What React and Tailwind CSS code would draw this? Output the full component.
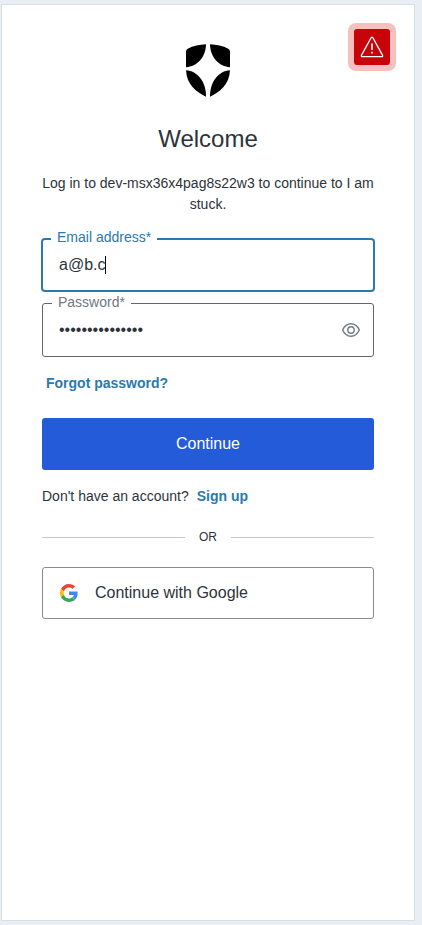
import { useState } from "react";

function Shield() {
  return (
    <svg className="h-[53px] w-11" viewBox="0 0 132 158" preserveAspectRatio="none" role="img" aria-label="Auth0">
      <path d="M60 1C60 38 33 69 0 69V22Q0 17 5 14C22 6 40 2 60 1Z" />
      <path d="M72 1C72 38 99 69 132 69V22Q132 17 127 14C110 6 92 2 72 1Z" />
      <path d="M0 78C34 79 61 114 60 157C30 143 2 120 0 78Z" />
      <path d="M132 78C98 79 71 114 72 157C102 143 130 120 132 78Z" />
    </svg>
  );
}

function GoogleLogo() {
  return (
    <svg className="h-[18px] w-[18px]" viewBox="0 0 48 48" aria-hidden="true">
      <path fill="#ea4335" d="M24 9.5c3.54 0 6.71 1.22 9.21 3.6l6.85-6.85C35.9 2.38 30.47 0 24 0 14.62 0 6.51 5.38 2.56 13.22l7.98 6.19C12.43 13.72 17.74 9.5 24 9.5z" />
      <path fill="#4285f4" d="M46.98 24.55c0-1.57-.15-3.09-.38-4.55H24v9.02h12.94c-.58 2.96-2.26 5.48-4.78 7.18l7.73 6c4.51-4.18 7.09-10.36 7.09-17.65z" />
      <path fill="#fbbc05" d="M10.53 28.59c-.48-1.45-.76-2.99-.76-4.59s.27-3.14.76-4.59l-7.98-6.19C.92 16.46 0 20.12 0 24c0 3.88.92 7.54 2.56 10.78l7.97-6.19z" />
      <path fill="#34a853" d="M24 48c6.48 0 11.93-2.13 15.89-5.81l-7.73-6c-2.15 1.45-4.92 2.3-8.16 2.3-6.26 0-11.57-4.22-13.47-9.91l-7.98 6.19C6.51 42.62 14.62 48 24 48z" />
    </svg>
  );
}

function EyeIcon() {
  return (
    <svg className="h-[14px] w-[18px]" viewBox="0 0 18 14" fill="none" stroke="#737a86" strokeWidth="1.4" aria-hidden="true">
      <path d="M.7 7C2.4 3 5.4.8 9 .8S15.600 3 17.300 7C15.600 11 12.600 13.200 9 13.200S2.400 11 .7 7Z" />
      <circle cx="9" cy="7" r="3.200" />
    </svg>
  );
}

function AlertBadge() {
  return (
    <button
      type="button"
      aria-label="Warning"
      className="absolute top-[18px] right-[18px] flex h-12 w-12 items-center justify-center rounded-lg bg-[#f6c0c0]"
    >
      <span className="flex h-9 w-9 items-center justify-center rounded-[3px] bg-[#c8040b]">
        <svg className="h-[22px] w-6" viewBox="0 0 24 22" fill="none" stroke="white" strokeWidth="1.3" strokeLinejoin="round" aria-hidden="true">
          <path d="M11.100 1.800Q12 .7 12.900 1.800L22.600 19.400Q23 20.700 21.700 20.700H2.300Q1 20.700 1.400 19.400Z" />
          <path d="M12 7.500V14" strokeWidth="1.600" />
          <path d="M12 15.800V17.600" strokeWidth="1.600" />
        </svg>
      </span>
    </button>
  );
}

export default function App() {
  const [email, setEmail] = useState("a@b.c");
  const [password, setPassword] = useState("correcthorse123");
  const [visible, setVisible] = useState(false);

  return (
    <div className="flex min-h-screen flex-col bg-[#e9eef5] pt-1 pr-[7px] pb-1 pl-px font-['Liberation_Sans',Arial,sans-serif] text-[#2d333a]">
      <main className="relative flex flex-1 flex-col border border-[#d9dee5] bg-white px-10 pt-[39px] pb-10">
        <AlertBadge />

        <header className="flex flex-col items-center text-center">
          <Shield />
          <h1 className="mt-6 text-2xl leading-9">Welcome</h1>
          <p className="mt-4 text-sm leading-[21px]">
            Log in to dev-msx36x4pag8s22w3 to continue to I am stuck.
          </p>
        </header>

        <form className="mt-[23px] flex flex-col" onSubmit={(e) => e.preventDefault()}>
          <div className="relative -mx-px">
            <label htmlFor="email" className="absolute -top-[9px] left-[10px] bg-white px-[6px] text-sm leading-4 text-[#2a7aae]">
              Email address*
            </label>
            <input
              id="email"
              type="email"
              value={email}
              onChange={(e) => setEmail(e.target.value)}
              className="block h-[54px] w-full rounded border-2 border-[#2a7aae] px-4 text-base caret-transparent outline-none"
            />
            <span className="absolute top-[18px] left-16 h-[18px] w-px bg-black" />
          </div>

          <div className="relative mt-[11px]">
            <label htmlFor="password" className="absolute -top-[9px] left-[10px] bg-white px-[6px] text-sm leading-4 text-[#6f7780]">
              Password*
            </label>
            <div className="flex h-[54px] items-center rounded-[3px] border border-[#666666] pr-[13px] pl-4">
              <input
                id="password"
                type={visible ? "text" : "password"}
                value={password}
                onChange={(e) => setPassword(e.target.value)}
                className="min-w-0 flex-1 text-base outline-none"
              />
              <button type="button" aria-label="Show password" onClick={() => setVisible(!visible)}>
                <EyeIcon />
              </button>
            </div>
          </div>

          <a href="#forgot" className="mt-4 ml-1 self-start text-sm font-bold text-[#2a7aae]">
            Forgot password?
          </a>

          <button type="submit" className="mt-[25px] h-[52px] rounded-[3px] bg-[#235bd9] text-base text-white">
            Continue
          </button>
        </form>

        <p className="mt-4 text-sm">
          Don't have an account?
          <a href="#signup" className="ml-2 font-bold text-[#2a7aae]">
            Sign up
          </a>
        </p>

        <div className="mt-[23px] flex items-center text-xs">
          <span className="h-px flex-1 bg-[#c5c6cd]" />
          <span className="px-[14px]">OR</span>
          <span className="h-px flex-1 bg-[#c5c6cd]" />
        </div>

        <button type="button" className="mt-[22px] flex h-[52px] items-center gap-[17px] rounded-[3px] border border-[#8c8c90] px-[17px] text-base">
          <GoogleLogo />
          Continue with Google
        </button>
      </main>
    </div>
  );
}
